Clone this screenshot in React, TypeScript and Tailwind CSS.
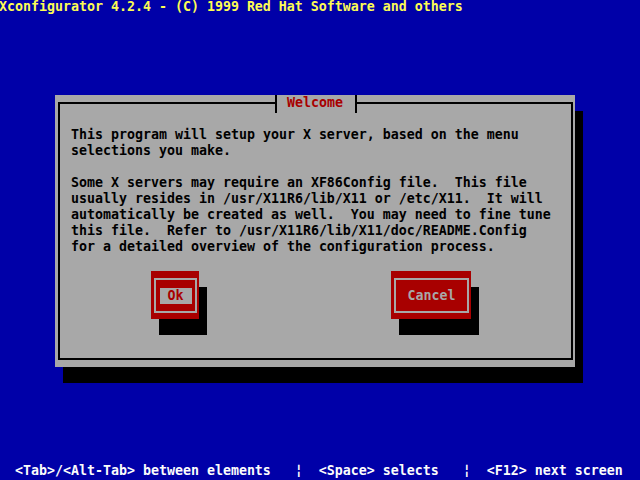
const font = "font-['DejaVu_Sans_Mono','Liberation_Mono',monospace] text-[13.29px] leading-4 font-bold";

const Button = ({ label, width, focused }: { label: string; width: string; focused?: boolean }) => (
  <div className={`${width} h-12 bg-[#a80000] shadow-[8px_16px_0_0_#000] pt-[7px] pl-[3px] pr-[2px] pb-[6px]`}>
    <div className="h-full border-2 border-[#a8a8a8] flex items-center justify-center">
      {focused ? (
        <div className="w-8 h-4 bg-[#a8a8a8] text-[#a80000] text-center">{label}</div>
      ) : (
        <div className="h-4 text-[#a8a8a8] whitespace-pre">{label}</div>
      )}
    </div>
  </div>
);

export default function App() {
  return (
    <div className="w-[640px] h-[480px] overflow-hidden bg-[#0000a8]">
      <div className={`-ml-px -mt-px w-[641px] h-[480px] flex flex-col ${font}`}>
        <div className="h-4 text-[#fcfc54] whitespace-pre">
          Xconfigurator 4.2.4 - (C) 1999 Red Hat Software and others
        </div>

        {/* dialog window */}
        <div className="mt-20 ml-14 w-[520px] h-[272px] bg-[#a8a8a8] shadow-[8px_16px_0_0_#000] pt-[7px] pl-[3px] pr-[2px] pb-[7px]">
          <div className="relative h-full border-2 border-black">
            <div className="absolute left-[215px] top-[-9px] w-[82px] h-[18px] bg-[#a8a8a8] border-x-2 border-black pl-[10px] text-[#a80000]">
              Welcome
            </div>

            <div className="ml-[11px] mt-[23px] text-black whitespace-pre">
              <div className="h-4">This program will setup your X server, based on the menu</div>
              <div className="h-4">selections you make.</div>
              <div className="h-4"></div>
              <div className="h-4">Some X servers may require an XF86Config file.  This file</div>
              <div className="h-4">usually resides in /usr/X11R6/lib/X11 or /etc/X11.  It will</div>
              <div className="h-4">automatically be created as well.  You may need to fine tune</div>
              <div className="h-4">this file.  Refer to /usr/X11R6/lib/X11/doc/README.Config</div>
              <div className="h-4">for a detailed overview of the configuration process.</div>
            </div>

            <div className="mt-4 ml-[91px] flex gap-[192px]">
              <Button label="Ok" width="w-12" focused />
              <Button label="Cancel" width="w-20" />
            </div>
          </div>
        </div>

        <div className="mt-auto h-4 text-[#fcfcfc] whitespace-pre">
          {"  <Tab>/<Alt-Tab> between elements   \u00a6  <Space> selects   \u00a6  <F12> next screen"}
        </div>
      </div>
    </div>
  );
}
